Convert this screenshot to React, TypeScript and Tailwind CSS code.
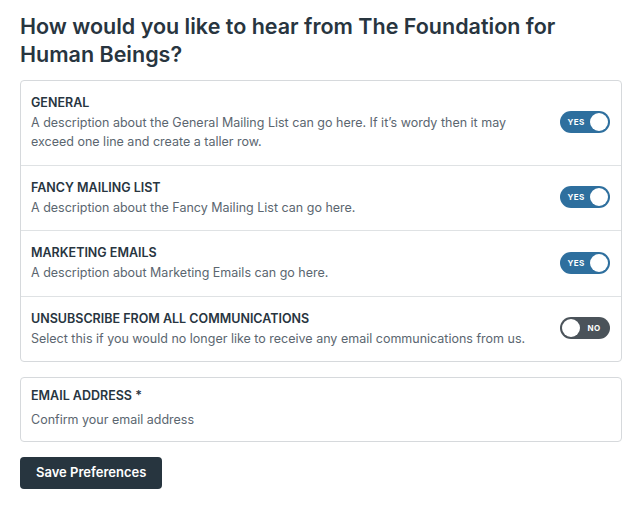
import React, { useState } from 'react';

type Pref = { key: string; title: string; description: string; on: boolean };

const initial: Pref[] = [
  {
    key: 'general',
    title: 'General',
    description:
      'A description about the General Mailing List can go here. If it’s wordy then it may exceed one line and create a taller row.',
    on: true,
  },
  { key: 'fancy', title: 'Fancy Mailing List', description: 'A description about the Fancy Mailing List can go here.', on: true },
  { key: 'marketing', title: 'Marketing Emails', description: 'A description about Marketing Emails can go here.', on: true },
  {
    key: 'unsub',
    title: 'Unsubscribe from all communications',
    description: 'Select this if you would no longer like to receive any email communications from us.',
    on: false,
  },
];

const Toggle: React.FC<{ on: boolean; onClick: () => void }> = ({ on, onClick }) => (
  <button
    onClick={onClick}
    className={`relative flex h-[22px] w-[50px] shrink-0 items-center rounded-full px-[2px] ${
      on ? 'bg-[#2e6f9e] flex-row' : 'bg-[#4b535a] flex-row-reverse'
    }`}
  >
    <span className="flex-1 text-center text-[8px] font-bold tracking-wider text-white">{on ? 'YES' : 'NO'}</span>
    <span className="h-[18px] w-[18px] rounded-full bg-white" />
  </button>
);

export default function App() {
  const [prefs, setPrefs] = useState(initial);

  return (
    <div className="bg-white pl-5 pr-[14px] pt-3 font-[Inter,sans-serif] text-[#28353f]">
      <h1 className="mb-3 text-[21.5px] font-semibold leading-[28px]">
        How would you like to hear from The Foundation for Human Beings?
      </h1>

      <div className="rounded border border-[#d6d9dc]">
        {prefs.map((p, i) => (
          <div
            key={p.key}
            className={`flex items-center gap-4 px-[10px] pt-3 pb-[13.5px] ${i > 0 ? 'border-t border-[#dfe2e4]' : ''}`}
          >
            <div className="flex-1">
              <div className="text-[12.5px] font-semibold uppercase leading-5">{p.title}</div>
              <div className="text-[12.5px] leading-[19px] text-[#5b6670]">{p.description}</div>
            </div>
            <div className="pr-[1px]">
              <Toggle
                on={p.on}
                onClick={() => setPrefs(prefs.map(q => (q.key === p.key ? { ...q, on: !q.on } : q)))}
              />
            </div>
          </div>
        ))}
      </div>

      <div className="mt-[15px] rounded border border-[#d6d9dc] px-[10px] pt-2 pb-[9px]">
        <label className="block text-[12.5px] font-semibold uppercase leading-5">Email Address *</label>
        <input
          placeholder="Confirm your email address"
          className="block h-[26px] w-full bg-transparent text-[12.5px] outline-none placeholder:text-[#5b6670]"
        />
      </div>

      <button className="mt-[15px] block h-8 rounded bg-[#27353f] px-4 text-[13px] font-semibold text-white">
        Save Preferences
      </button>
    </div>
  );
}
